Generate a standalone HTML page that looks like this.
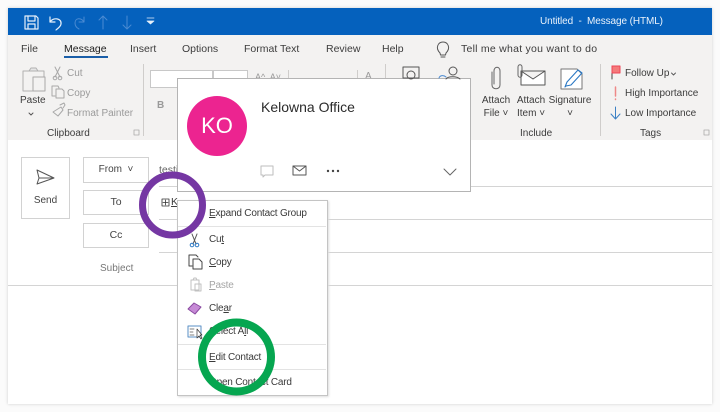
<!DOCTYPE html>
<html><head><meta charset="utf-8"><style>
html,body{margin:0;padding:0;background:#fff}
#p{position:relative;width:720px;height:412px;overflow:hidden;background:#fbfbfb;font-family:"Liberation Sans",sans-serif;color:#333;filter:blur(.3px)}
.a{position:absolute}
.t{position:absolute;white-space:nowrap;font-size:10.5px;line-height:14px;color:#3c3c3c}
.g{color:#9a9a9a}
.r{font-size:10px}
.c{transform:translateX(-50%);text-align:center}
.sep{position:absolute;width:1px;background:#cfcdcb}
.ln{position:absolute;height:1px;background:#d4d4d4}
.btn{position:absolute;background:#fff;border:1px solid #d2d2d2;box-sizing:border-box;text-align:center;font-size:10.5px;color:#444}
.m{position:absolute;left:209px;font-size:10px;line-height:14px;color:#3a3a3a;white-space:nowrap;letter-spacing:-.2px}
u{text-underline-offset:1px}
svg{position:absolute;left:0;top:0;overflow:visible}
</style></head><body><div id="p">
<div class="a" id="w" style="left:8px;top:8px;width:704px;height:396px;background:#fff;box-shadow:0 0 3px #ccc"></div>
<div class="a" style="left:8px;top:8px;width:704px;height:27px;background:#0561bd"></div>
<div class="a" style="left:8px;top:35px;width:704px;height:105px;background:#f3f2f1"></div>

<div class="t" style="left:540px;top:15px;color:#eaf2fb;font-size:10px;letter-spacing:-.1px">Untitled &nbsp;-&nbsp; Message (HTML)</div>

<div class="t" style="left:21px;top:42px">File</div>
<div class="t" style="left:64px;top:42px;color:#222">Message</div>
<div class="a" style="left:64px;top:56px;width:44px;height:2px;background:#1a5ea8"></div>
<div class="t" style="left:130px;top:42px">Insert</div>
<div class="t" style="left:182px;top:42px">Options</div>
<div class="t" style="left:244px;top:42px">Format Text</div>
<div class="t" style="left:326px;top:42px">Review</div>
<div class="t" style="left:382px;top:42px">Help</div>
<div class="t" style="left:461px;top:42px;letter-spacing:.25px">Tell me what you want to do</div>

<div class="t r" style="left:20px;top:94px">Paste</div>
<div class="t r g" style="left:67px;top:67px">Cut</div>
<div class="t r g" style="left:67px;top:87px">Copy</div>
<div class="t r g" style="left:67px;top:107px">Format Painter</div>
<div class="t r" style="left:47px;top:127px">Clipboard</div>
<div class="t r g" style="left:157px;top:99px;font-weight:bold">B</div>

<div class="a" style="left:150px;top:70px;width:63px;height:18px;background:#fff;border:1px solid #c8c8c8;box-sizing:border-box"></div>
<div class="a" style="left:213px;top:70px;width:35px;height:18px;background:#fff;border:1px solid #c8c8c8;box-sizing:border-box"></div>
<div class="t r g" style="left:255px;top:70px;font-size:9px">A^&nbsp; A˅</div>
<div class="t r g" style="left:365px;top:70px">A</div>

<div class="sep" style="left:143px;top:64px;height:72px"></div>
<div class="sep" style="left:288px;top:70px;height:20px"></div>
<div class="sep" style="left:357px;top:70px;height:20px"></div>
<div class="sep" style="left:385px;top:64px;height:72px"></div>
<div class="sep" style="left:600px;top:64px;height:72px"></div>

<div class="t r c" style="left:496px;top:94px">Attach</div>
<div class="t r c" style="left:496px;top:107px">File ˅</div>
<div class="t r c" style="left:531px;top:94px">Attach</div>
<div class="t r c" style="left:531px;top:107px">Item ˅</div>
<div class="t r c" style="left:570px;top:94px">Signature</div>
<div class="t r c" style="left:570px;top:107px">˅</div>
<div class="t r" style="left:520px;top:127px">Include</div>
<div class="t r" style="left:625px;top:67px">Follow Up</div>
<div class="t r" style="left:625px;top:87px">High Importance</div>
<div class="t r" style="left:625px;top:107px">Low Importance</div>
<div class="t r" style="left:640px;top:127px">Tags</div>

<div class="ln" style="left:159px;top:186px;width:553px"></div>
<div class="ln" style="left:159px;top:219px;width:553px"></div>
<div class="ln" style="left:159px;top:252px;width:553px"></div>
<div class="ln" style="left:8px;top:285px;width:704px"></div>

<div class="btn" style="left:21px;top:157px;width:49px;height:62px;padding-top:37px;font-size:10px">Send</div>
<div class="btn" style="left:83px;top:157px;width:66px;height:26px;line-height:24px;font-size:10px">From &nbsp;˅</div>
<div class="btn" style="left:83px;top:190px;width:66px;height:25px;line-height:23px">To</div>
<div class="btn" style="left:83px;top:223px;width:66px;height:25px;line-height:23px">Cc</div>
<div class="t g" style="left:100px;top:262px;color:#777;font-size:10px">Subject</div>
<div class="t" style="left:159px;top:163px;color:#666">testi</div>
<div class="t" style="left:171px;top:195px"><u>K</u></div>

<div class="a" style="left:177px;top:78px;width:294px;height:114px;background:#fff;border:1px solid #b4b4b4;box-sizing:border-box"></div>
<div class="a" style="left:187px;top:96px;width:60px;height:60px;border-radius:50%;background:#ec2490;color:#fff;font-size:22px;line-height:60px;text-align:center">KO</div>
<div class="t" style="left:261px;top:98px;font-size:14px;line-height:18px;color:#2b2b2b">Kelowna Office</div>

<div class="a" style="left:177px;top:200px;width:151px;height:196px;background:#fff;border:1px solid #c4c4c4;box-sizing:border-box;box-shadow:1px 1px 2px #ddd"></div>
<div class="m" style="top:207px"><u>E</u>xpand Contact Group</div>
<div class="ln" style="left:178px;top:226px;width:148px;background:#e3e3e3"></div>
<div class="m" style="top:233px">Cu<u>t</u></div>
<div class="m" style="top:256px"><u>C</u>opy</div>
<div class="m" style="top:279px;color:#a5a5a5"><u>P</u>aste</div>
<div class="m" style="top:302px">Cle<u>a</u>r</div>
<div class="m" style="top:325px">Select A<u>l</u>l</div>
<div class="ln" style="left:178px;top:344px;width:148px;background:#e3e3e3"></div>
<div class="m" style="top:351px"><u>E</u>dit Contact</div>
<div class="ln" style="left:178px;top:369px;width:148px;background:#e3e3e3"></div>
<div class="m" style="top:376px">Open Contact Card</div>

<svg width="720" height="412" fill="none" stroke-linecap="round" stroke-linejoin="round">
<!-- QAT -->
<g stroke="#e6f0fa" stroke-width="1.2">
<path d="M25 16h11l2 2v11H25z"/><path d="M28 16v5h7v-5M28 29v-5h7v5"/>
<path d="M50 17v5h5M50 22c3-5 12-4 11 2-.5 3-3 4-5 6"/>
</g>
<g stroke="#4a8ad2" stroke-width="1">
<path d="M84 17v5h-5M84 22c-3-5-9-4-9 1 0 3 2 5 4 6"/>
<path d="M103 29V16M99 20l4-4 4 4M127 16v13M123 25l4 4 4-4"/>
</g>
<path d="M147 18h7M147 21h7l-3.500 3z" stroke="#e6f0fa" fill="#e6f0fa" stroke-width=".8"/>
<!-- bulb -->
<path d="M440 53c-5-5-2-11 3-11s8 6 3 11l-.5 2h-5zM441 57h4" stroke="#555" stroke-width="1"/>
<!-- Clipboard -->
<path d="M23 71h21v20H23z" fill="#f3f2f1" stroke="#b0b0b0"/><path d="M29 71l2-3h5l2 3z" stroke="#b0b0b0" fill="#e6e6e6"/>
<path d="M33 77h12v14H33z" fill="#f3f2f1" stroke="#a8a8a8"/>
<path d="M29 113l2 2 2-2" stroke="#555"/>
<path d="M55 67l5 10M60 67l-5 10" stroke="#a8a8a8"/><circle cx="55" cy="78" r="1.800" stroke="#a8a8a8"/><circle cx="60" cy="78" r="1.800" stroke="#a8a8a8"/>
<path d="M55 96h-3V86h6l1 2M56 89h6l2 2v7h-8z" stroke="#a8a8a8"/>
<path d="M53 112l8-5 2 3-5 6zM60 105l4-2 1 2-2 3" stroke="#a8a8a8"/>
<path d="M134 130h5v5h-5z" stroke="#aaa" stroke-width=".8"/>
<!-- ribbon partial -->
<path d="M403 67h16v11h-16z" stroke="#555"/><circle cx="411" cy="75" r="4" stroke="#555"/>
<circle cx="453" cy="71" r="4" stroke="#555"/><path d="M446 79c2-3 11-3 14 0" stroke="#555"/><path d="M439 78c1-3 5-3 7-1" stroke="#4a8ad2"/>
<!-- attach -->
<path d="M492 72v13c0 5 8 5 8 0V71c0-5-6-5-6 0v13" stroke="#666"/>
<path d="M521 71h24v14h-24zM521 71l12 8 12-8" stroke="#555" fill="#fff"/>
<path d="M518 67c0-3 4-3 4 0v8c0 3-4 3-4 0z" stroke="#666"/>
<path d="M561 69h16l5 5v15h-21z" stroke="#777" fill="#fff"/>
<path d="M566 86l-1 1 2-5 11-12 4 3-11 12z" stroke="#2b78c4" stroke-width="1.100"/>
<!-- tags -->
<path d="M612 79V66" stroke="#444"/><path d="M612 66h8v7h-8z" fill="#f47a7a" stroke="#e45"/>
<path d="M615.500 87v9" stroke="#e88" stroke-width="1.500"/><path d="M615.500 99v.5" stroke="#e88" stroke-width="1.500"/>
<path d="M615.500 107v12M611 114l4.500 5 4.500-5" stroke="#3b80c4"/>
<path d="M704 130h5v5h-5z" stroke="#aaa" stroke-width=".8"/>
<path d="M671.500 73l2 2 2-2" stroke="#555" stroke-width=".9"/>
<!-- send -->
<path d="M37 170l17 8-17 6 2-6zM39 178h15" stroke="#555" stroke-width="1"/>
<!-- K square -->
<path d="M162 199h7v7h-7zM165.500 200v5M163 202.500h5" stroke="#333" stroke-width=".8"/>
<!-- card icons -->
<path d="M261 166h12v9h-8l-2 2v-2h-2z" stroke="#bdbdbd"/>
<path d="M293 166h13v9h-13zM293 166l6.500 5 6.500-5" stroke="#555"/>
<circle cx="328" cy="171" r="1.200" fill="#444"/><circle cx="333" cy="171" r="1.200" fill="#444"/><circle cx="338" cy="171" r="1.200" fill="#444"/>
<path d="M444 169l6 6 6-6" stroke="#666"/>
<!-- menu icons -->
<path d="M192 234l4 10M197 234l-4 10" stroke="#555"/><circle cx="192" cy="245" r="1.800" stroke="#2b78c4"/><circle cx="197" cy="245" r="1.800" stroke="#2b78c4"/>
<path d="M192 266h-3v-11h7l2 2M193 259h6l3 3v7h-9z" stroke="#444"/>
<path d="M191 280h8v10h-8zM193 280l1-2h2l1 2M195 284h6v7h-6z" stroke="#c0c0c0"/>
<path d="M188 309l6-6 7 4-6 7z" fill="#c68ad6" stroke="#8a4aa0"/>
<path d="M188 326h13v11h-13z" stroke="#5a8fc4"/><path d="M190 329h4M190 332h3M190 335h4" stroke="#555" stroke-width=".8"/><path d="M197 329v9l2-2 2 3 1-1-2-3h2z" fill="#fff" stroke="#333" stroke-width=".7"/>
<!-- circles -->
<circle cx="172.500" cy="205" r="30" stroke="#7537a3" stroke-width="7"/>
<circle cx="236.500" cy="357" r="34.500" stroke="#06a650" stroke-width="8"/>
</svg>
</div></body></html>
